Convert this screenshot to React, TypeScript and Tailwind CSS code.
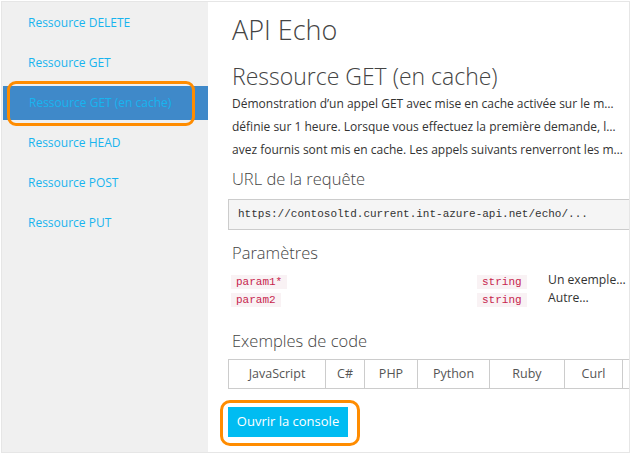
import React from "react";

const navItems = [
  "Ressource DELETE",
  "Ressource GET",
  "Ressource GET (en cache)",
  "Ressource HEAD",
  "Ressource POST",
  "Ressource PUT",
];

const params = [
  { name: "param1*", type: "string", desc: "Un exemple…" },
  { name: "param2", type: "string", desc: "Autre…" },
];

const tabs = [
  { label: "JavaScript", w: "w-[97px]" },
  { label: "C#", w: "w-[39px]" },
  { label: "PHP", w: "w-[53px]" },
  { label: "Python", w: "w-[72px]" },
  { label: "Ruby", w: "w-[75px]" },
  { label: "Curl", w: "w-[58px]" },
  { label: "", w: "w-[40px]" },
];

const font = { fontFamily: '"Open Sans", "Noto Sans", sans-serif' };

export default function App() {
  return (
    <div className="w-[631px] h-[454px] bg-white" style={font}>
      <div className="relative ml-px mt-px w-[629px] h-[452px] flex border border-[#e6e6e6]">
        {/* Sidebar */}
        <nav className="w-[206px] shrink-0 bg-[#f0f0f0] pt-[4px]">
          {navItems.map((item, i) => (
            <div
              key={item}
              className={`h-[34px] mb-[6px] flex items-center pl-[26px] text-[12px] text-[#18b4ef] whitespace-nowrap ${
                i === 2 ? "bg-[#3f89c9] ml-px" : ""
              }`}
            >
              {item}
            </div>
          ))}
        </nav>

        {/* Main */}
        <main className="flex-1 min-w-0 overflow-hidden pl-[20px] pr-[4px] pt-[8px] text-[#333]">
          <h1 className="text-[27px] font-light leading-[40px] pl-[4px] text-[#444]">API Echo</h1>
          <h2 className="mt-[10px] text-[23px] font-light leading-[32px] pl-[4px] text-[#444]">
            Ressource GET (en cache)
          </h2>
          <div className="pl-[4px] text-[12px] leading-[23px] whitespace-nowrap">
            <p>Démonstration d’un appel GET avec mise en cache activée sur le m…</p>
            <p>définie sur 1 heure. Lorsque vous effectuez la première demande, l…</p>
            <p>avez fournis sont mis en cache. Les appels suivants renverront les m…</p>
          </div>

          <h3 className="mt-[5px] pl-[4px] text-[16.5px] font-light leading-[26px] text-[#444]">URL de la requête</h3>
          <div className="mt-[7px] -mr-[12px] h-[31px] flex items-center pl-[9px] bg-[#f5f5f5] border border-[#cccccc] font-['Liberation_Mono',monospace] text-[11px] text-[#333] whitespace-nowrap">
            https://contosoltd.current.int-azure-api.net/echo/...
          </div>

          <h3 className="mt-[10px] pl-[4px] text-[16.5px] font-light leading-[26px] text-[#444]">Paramètres</h3>
          <div className="mt-[6px] pl-[3px] flex flex-col gap-[3px]">
            {params.map((p) => (
              <div key={p.name} className="grid grid-cols-[246px_71px_1fr] items-center h-[15px] leading-[15px]">
                <div>
                  <code className="bg-[#f9f2f4] text-[#c7254e] font-['Liberation_Mono',monospace] text-[11px] px-[5px] py-[1px]">
                    {p.name}
                  </code>
                </div>
                <div>
                  <code className="bg-[#f9f2f4] text-[#c7254e] font-['Liberation_Mono',monospace] text-[11px] px-[5px] py-[1px]">
                    {p.type}
                  </code>
                </div>
                <div className="text-[12.2px] whitespace-nowrap -mt-[3px]">{p.desc}</div>
              </div>
            ))}
          </div>

          <h3 className="mt-[23px] pl-[4px] text-[16.5px] font-light leading-[26px] text-[#444]">Exemples de code</h3>
          <div className="mt-[5px] flex h-[30px] border-y border-l border-[#cccccc] w-max">
            {tabs.map((t, i) => (
              <div
                key={i}
                className={`${t.w} shrink-0 flex items-center justify-center border-r border-[#cccccc] text-[12.5px] text-[#555]`}
              >
                {t.label}
              </div>
            ))}
          </div>

          <button className="mt-[18px] w-[120px] h-[30px] bg-[#00bcf2] text-white text-[13px] whitespace-nowrap flex items-center justify-center">
            Ouvrir la console
          </button>
        </main>

        {/* Annotation outlines */}
        <div className="absolute left-[5px] top-[79px] w-[188px] h-[45px] rounded-[9px] border-[3px] border-[#ff8c00] pointer-events-none" />
        <div className="absolute left-[218px] top-[398px] w-[140px] h-[46px] rounded-[10px] border-[3px] border-[#ff8c00] pointer-events-none" />
      </div>
    </div>
  );
}
